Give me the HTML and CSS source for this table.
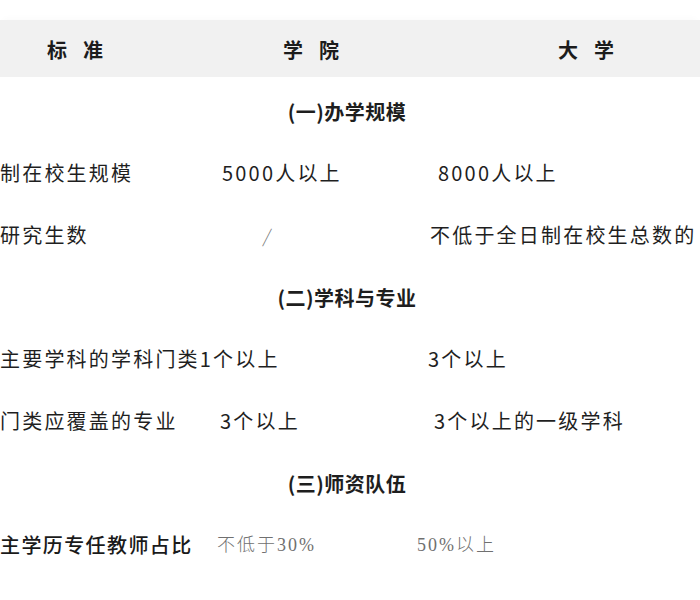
FILE: index.html
```html
<!DOCTYPE html>
<html lang="zh-CN">
<head>
<meta charset="utf-8">
<title>标准</title>
<link rel="stylesheet" href="styles.css">
</head>
<body>
<div class="page">
  <div class="head">
    <div class="hcell">标准</div>
    <div class="hcell">学院</div>
    <div class="hcell">大学</div>
  </div>

  <div class="section">(一)办学规模</div>
  <div class="row">
    <div class="c1">制在校生规模</div>
    <div class="c2 nudge-2">5000人以上</div>
    <div class="c3 nudge-8">8000人以上</div>
  </div>
  <div class="row">
    <div class="c1">研究生数</div>
    <div class="c2 slash">/</div>
    <div class="c3">不低于全日制在校生总数的</div>
  </div>

  <div class="section">(二)学科与专业</div>
  <div class="row">
    <div class="c1 span2">主要学科的学科门类1个以上</div>
    <div class="c3 nudge-n2">3个以上</div>
  </div>
  <div class="row">
    <div class="c1">门类应覆盖的专业</div>
    <div class="c2">3个以上</div>
    <div class="c3 nudge-4">3个以上的一级学科</div>
  </div>

  <div class="section">(三)师资队伍</div>
  <div class="row">
    <div class="c1 strong">主学历专任教师占比</div>
    <div class="c2 serif nudge-n3">不低于30%</div>
    <div class="c3 serif nudge-n13">50%以上</div>
  </div>
</div>
</body>
</html>
```

FILE: styles.css
```css
html, body {
  margin: 0;
  padding: 0;
  background: #ffffff;
}

body {
  font-family: "Noto Sans CJK SC", "Noto Sans", sans-serif;
  color: #222222;
  overflow: hidden;
}

.page {
  width: 700px;
  height: 600px;
  padding-top: 20px;
  box-sizing: border-box;
}

.head {
  display: grid;
  grid-template-columns: 236px 275px 1fr;
  align-items: center;
  height: 57px;
  padding-left: 47px;
  margin-bottom: 3px;
  background: #f1f1f1;
  box-shadow: 0 -5px 6px -3px rgba(0, 0, 0, 0.02);
}

.hcell {
  font-size: 20px;
  font-weight: 700;
  letter-spacing: 16px;
  line-height: 1;
  color: #1c1c1c;
  padding-top: 2px;
}

.section {
  height: 62px;
  display: flex;
  align-items: center;
  justify-content: center;
  padding-right: 6px;
  font-size: 20px;
  font-weight: 700;
  letter-spacing: 0.5px;
  color: #1e1e1e;
  box-sizing: border-box;
}

.row {
  height: 62px;
  display: grid;
  grid-template-columns: 220px 210px 1fr;
  align-items: center;
  font-size: 20px;
  letter-spacing: 2.2px;
  white-space: nowrap;
  color: #1f1f1f;
}

.c1, .c2, .c3 {
  line-height: 1;
}

.span2 {
  grid-column: 1 / span 2;
}

.span2 + .c3 {
  grid-column: 3;
}

.strong {
  font-weight: 500;
  letter-spacing: 1.4px;
  color: #1a1a1a;
}

.slash {
  padding-left: 44px;
  font-size: 18px;
  font-weight: 300;
  color: #777777;
  transform: skewX(-10deg);
}

.serif {
  font-family: "Liberation Serif", "Noto Sans CJK SC", serif;
  font-size: 18px;
  font-weight: 300;
  letter-spacing: 2px;
  color: #707070;
}

.nudge-2 { padding-left: 2px; }
.nudge-4 { padding-left: 4px; }
.nudge-8 { padding-left: 8px; }
.nudge-n2 { margin-left: -2px; }
.nudge-n3 { margin-left: -3px; }
.nudge-n13 { margin-left: -13px; }
```
